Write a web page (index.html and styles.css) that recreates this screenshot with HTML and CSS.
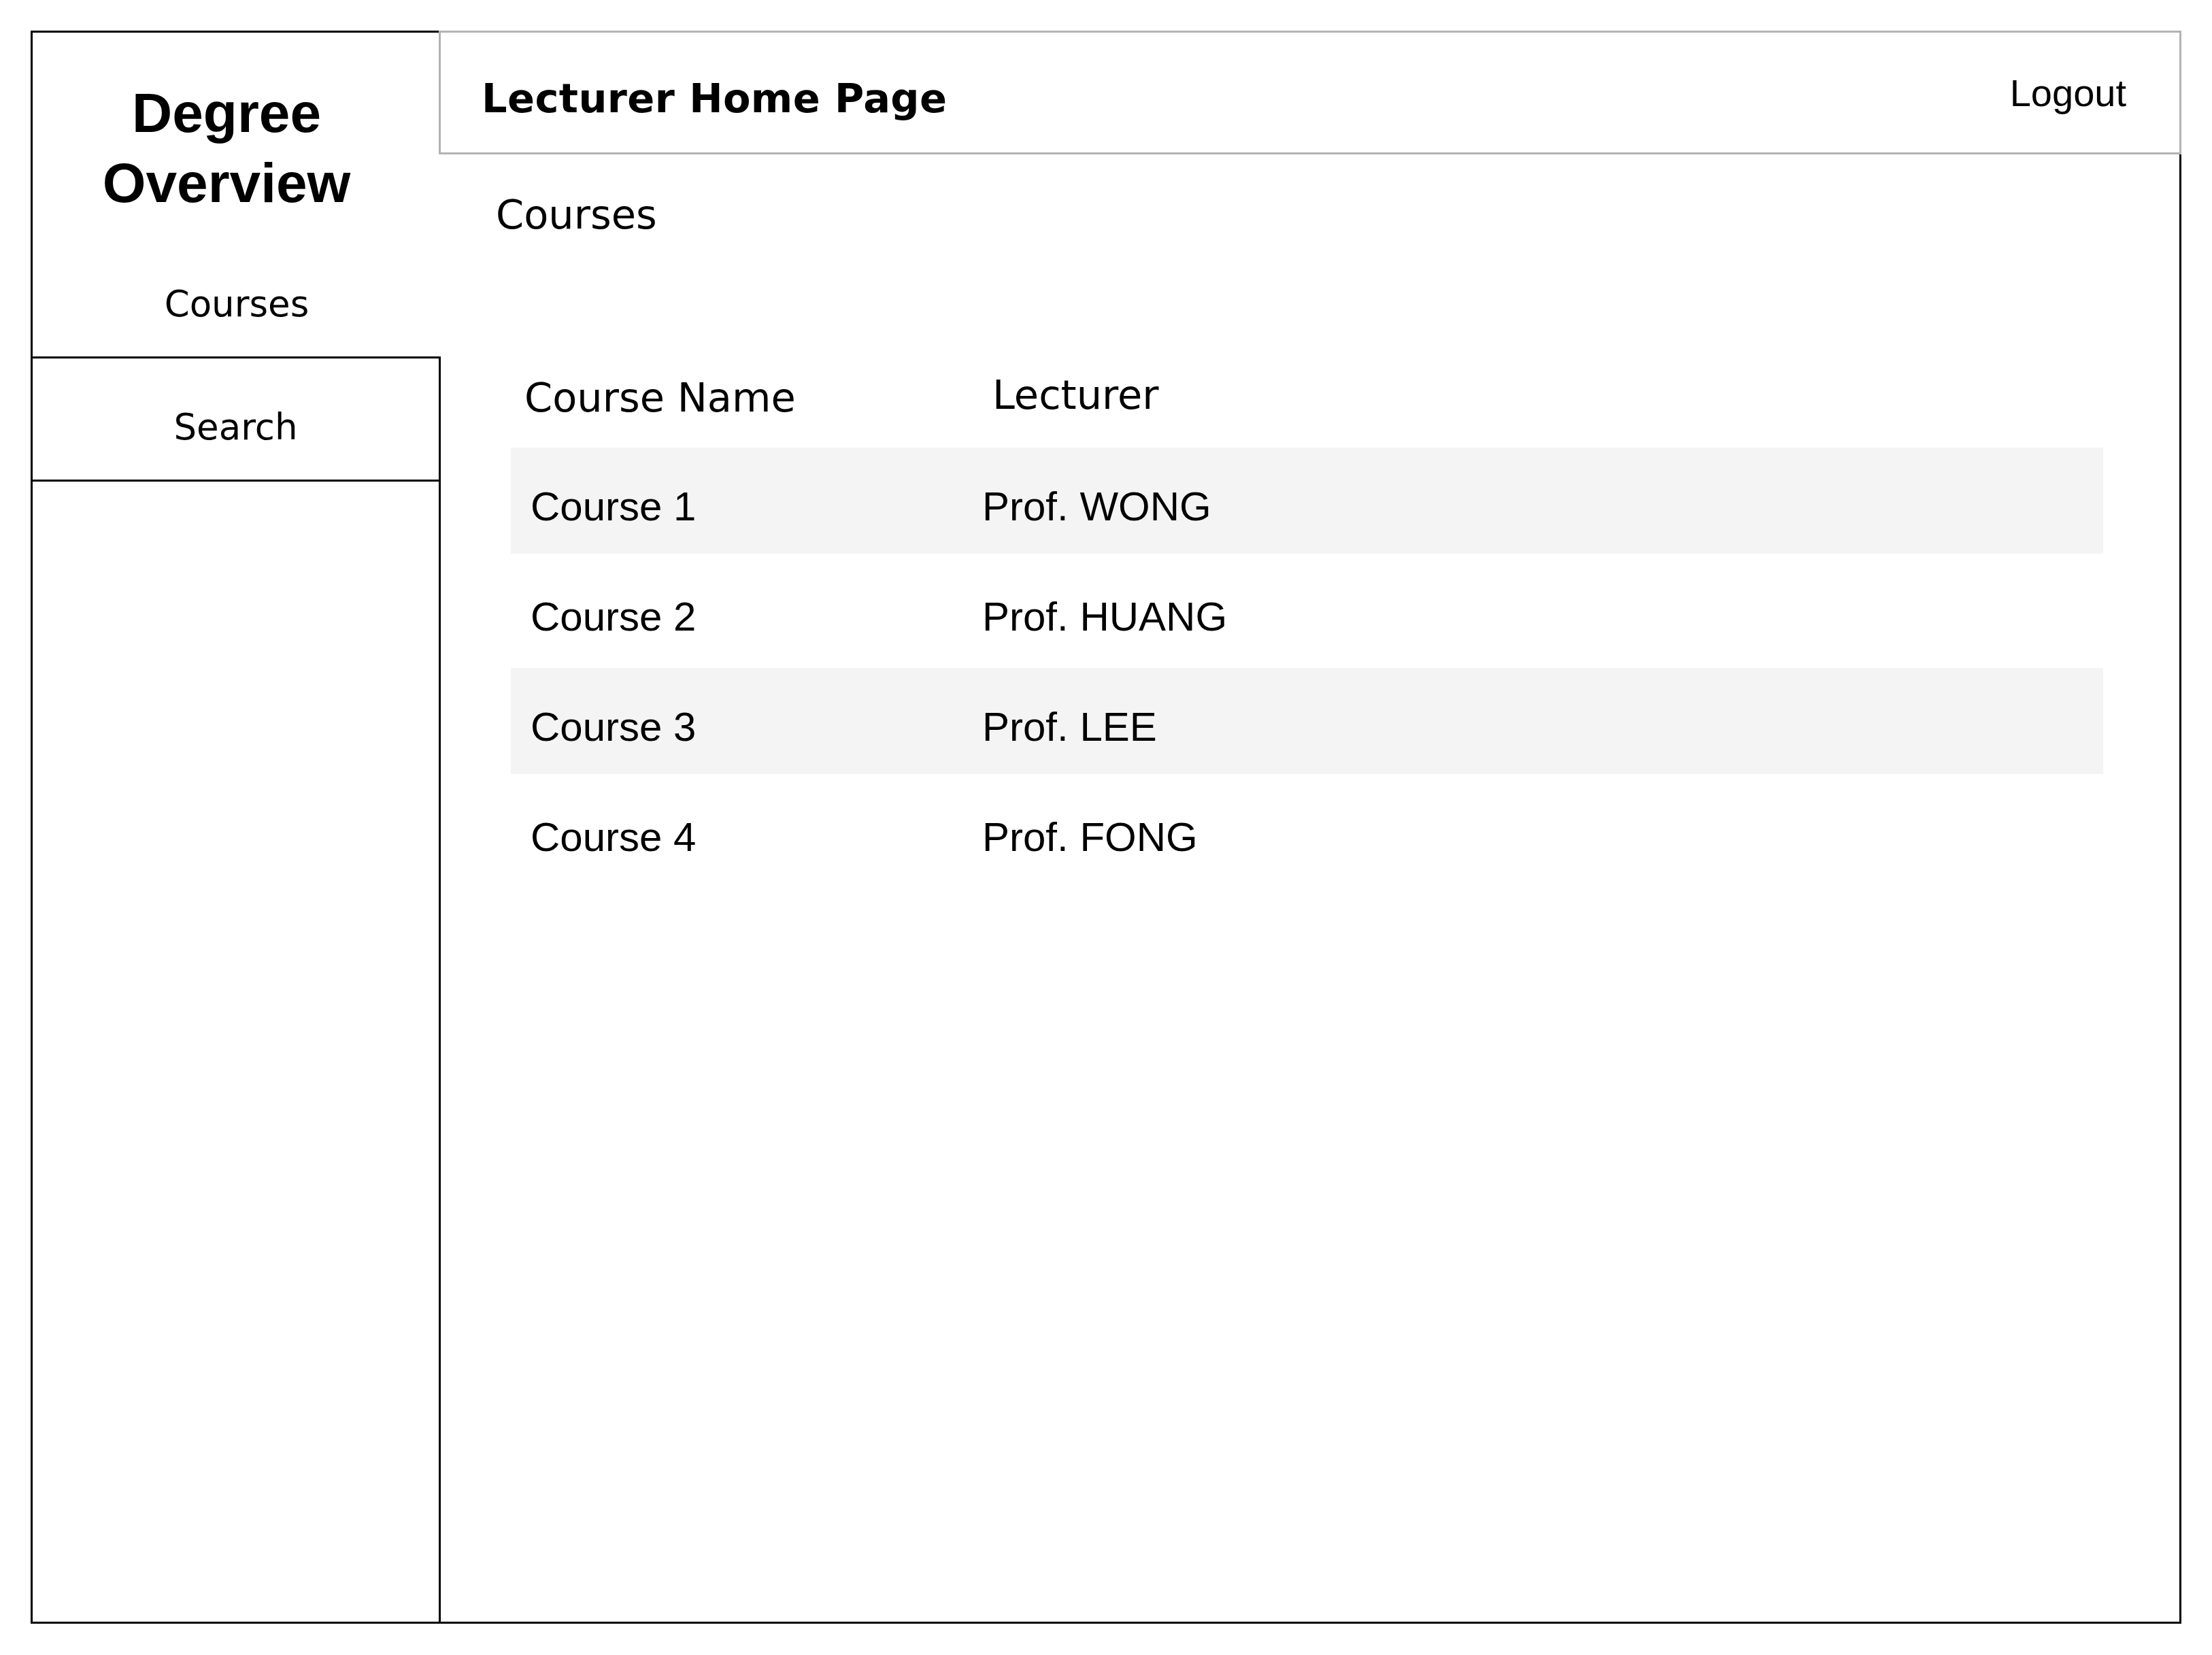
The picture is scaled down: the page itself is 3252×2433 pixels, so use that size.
FILE: index.html
```html
<!DOCTYPE html>
<html lang="en">
<head>
<meta charset="utf-8">
<title>Lecturer Home Page</title>
<link rel="stylesheet" href="styles.css">
</head>
<body>
<div class="frame">
  <aside class="sidebar">
    <div class="brand">Degree Overview</div>
    <a class="nav-item nav-item--active">Courses</a>
    <a class="nav-item nav-item--boxed">Search</a>
    <div class="sidebar-fill"></div>
  </aside>
  <main class="main">
    <header class="topbar">
      <h1 class="page-title">Lecturer Home Page</h1>
      <a class="logout">Logout</a>
    </header>
    <section class="content">
      <h2 class="section-title">Courses</h2>
      <div class="table">
        <div class="table-head">
          <div class="th th--name">Course Name</div>
          <div class="th th--lecturer">Lecturer</div>
        </div>
        <div class="table-body">
          <div class="table-row table-row--shaded"><div class="td td--name">Course 1</div><div class="td">Prof. WONG</div></div>
          <div class="table-row"><div class="td td--name">Course 2</div><div class="td">Prof. HUANG</div></div>
          <div class="table-row table-row--shaded"><div class="td td--name">Course 3</div><div class="td">Prof. LEE</div></div>
          <div class="table-row"><div class="td td--name">Course 4</div><div class="td">Prof. FONG</div></div>
        </div>
      </div>
    </section>
  </main>
</div>
</body>
</html>
```

FILE: styles.css
```css
* { box-sizing: border-box; }

html, body {
  margin: 0;
  padding: 0;
  background: #ffffff;
  color: #000000;
}

.frame {
  margin: 45px 0 0 45px;
  width: 3162px;
  height: 2342px;
  display: flex;
}

/* ---------- sidebar ---------- */
.sidebar {
  width: 603px;
  flex: 0 0 603px;
  display: flex;
  flex-direction: column;
  border-left: 3px solid #000;
  border-top: 3px solid #000;
  border-bottom: 3px solid #000;
}

.brand {
  height: 298px;
  padding: 66px 30px 0 0;
  text-align: center;
  font-family: "Liberation Sans", Arial, sans-serif;
  font-weight: bold;
  font-size: 82px;
  line-height: 103px;
}

.nav-item {
  display: flex;
  align-items: center;
  justify-content: center;
  height: 181px;
  padding-top: 24px;
  border-bottom: 3px solid #000;
  font-family: "DejaVu Sans", Verdana, sans-serif;
  font-size: 53px;
  line-height: 64px;
  color: #000;
  text-decoration: none;
}

.nav-item--boxed {
  border-right: 3px solid #000;
}

.sidebar-fill {
  flex: 1;
  border-right: 3px solid #000;
}

/* ---------- main ---------- */
.main {
  flex: 1;
  margin-left: -3px;
  display: flex;
  flex-direction: column;
}

.topbar {
  height: 182px;
  flex: 0 0 182px;
  border: 3px solid #b3b3b3;
  display: flex;
  justify-content: space-between;
  align-items: flex-start;
  padding: 54px 78px 0 60px;
}

.page-title {
  margin: 8px 0 0;
  font-family: "DejaVu Sans", Verdana, sans-serif;
  font-weight: bold;
  font-size: 59px;
  line-height: 70px;
  letter-spacing: 0.4px;
}

.logout {
  font-family: "Liberation Sans", Arial, sans-serif;
  font-size: 56px;
  line-height: 70px;
  color: #000;
  text-decoration: none;
}

.content {
  flex: 1;
  border-right: 3px solid #000;
  border-bottom: 3px solid #000;
  padding: 54px 112px 0 81px;
}

.section-title {
  margin: 0 0 195px 3px;
  font-family: "DejaVu Sans", Verdana, sans-serif;
  font-weight: normal;
  font-size: 59px;
  line-height: 70px;
}

.table {
  margin-left: 25px;
}

.table-head {
  display: grid;
  grid-template-columns: 693px 1fr;
  height: 112px;
  font-family: "DejaVu Sans", Verdana, sans-serif;
  font-size: 59px;
  line-height: 70px;
}

.th--name {
  padding: 4px 0 0 20px;
}

.th--lecturer {
  padding-left: 15px;
}

.table-body {
  display: flex;
  flex-direction: column;
  gap: 6px;
}

.table-row {
  display: grid;
  grid-template-columns: 693px 1fr;
  height: 156px;
  padding-top: 52px;
  font-family: "Liberation Sans", Arial, sans-serif;
  font-size: 60px;
  line-height: 70px;
}

.table-row--shaded {
  background: #f4f4f4;
}

.td--name {
  padding-left: 29px;
}
```
